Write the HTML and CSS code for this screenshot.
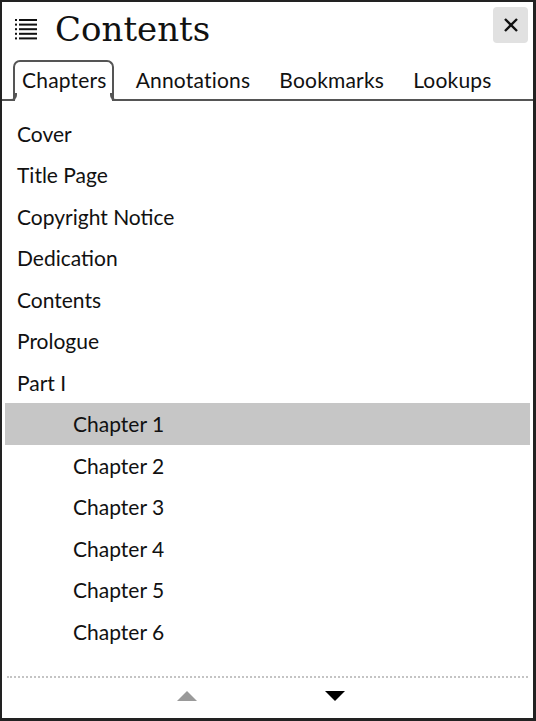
FILE: index.html
```html
<!DOCTYPE html>
<html>
<head>
<meta charset="utf-8">
<link rel="stylesheet" href="styles.css">
</head>
<body>
<div class="panel">
  <div class="header">
    <svg class="toc-icon" width="22" height="22" viewBox="0 0 22 22">
      <g fill="#111">
        <rect x="0" y="1" width="2" height="2"/><rect x="4" y="1" width="18" height="2"/>
        <rect x="0" y="5.6" width="2" height="2"/><rect x="4" y="5.6" width="18" height="2"/>
        <rect x="0" y="10.2" width="2" height="2"/><rect x="4" y="10.2" width="18" height="2"/>
        <rect x="0" y="14.8" width="2" height="2"/><rect x="4" y="14.8" width="18" height="2"/>
        <rect x="0" y="19.4" width="2" height="2"/><rect x="4" y="19.4" width="18" height="2"/>
      </g>
    </svg>
    <h1 class="title">Contents</h1>
    <button class="close" aria-label="Close">
      <svg width="16" height="16" viewBox="0 0 16 16"><path d="M2 2 L14 14 M14 2 L2 14" stroke="#111" stroke-width="2.4" fill="none"/></svg>
    </button>
  </div>
  <div class="tabs">
    <div class="tab active">Chapters</div>
    <div class="tab">Annotations</div>
    <div class="tab">Bookmarks</div>
    <div class="tab">Lookups</div>
  </div>
  <ul class="list">
    <li class="item">Cover</li>
    <li class="item">Title Page</li>
    <li class="item">Copyright Notice</li>
    <li class="item">Dedication</li>
    <li class="item">Contents</li>
    <li class="item">Prologue</li>
    <li class="item">Part I</li>
    <li class="item sub selected">Chapter 1</li>
    <li class="item sub">Chapter 2</li>
    <li class="item sub">Chapter 3</li>
    <li class="item sub">Chapter 4</li>
    <li class="item sub">Chapter 5</li>
    <li class="item sub">Chapter 6</li>
  </ul>
  <div class="footer">
    <span class="arrow up"></span>
    <span class="arrow down"></span>
  </div>
</div>
</body>
</html>
```
FILE: styles.css
```css
* { box-sizing: border-box; }
html, body { margin: 0; padding: 0; background: #fff; }
body { font-family: "Lato", "Open Sans", sans-serif; color: #111; }

.panel {
  width: 536px;
  height: 721px;
  border-style: solid;
  border-color: #222;
  border-width: 2px 3px 3px 2px;
  display: flex;
  flex-direction: column;
  overflow: hidden;
}

.header {
  display: flex;
  align-items: center;
  height: 57px;
  padding-left: 13px;
  padding-right: 5px;
}
.toc-icon { display: block; margin-top: -4px; }
.title {
  margin: -4px 0 0 18px;
  font-family: "DejaVu Serif", serif;
  font-weight: normal;
  font-size: 34px;
  line-height: 1;
  color: #111;
}
.close {
  margin-left: auto;
  margin-top: -12px;
  width: 35px;
  height: 36px;
  border: none;
  border-radius: 4px;
  background: #e1e1e1;
  display: flex;
  align-items: center;
  justify-content: center;
  padding: 0;
}
.close svg { display: block; }

.tabs {
  display: flex;
  align-items: flex-end;
  height: 42px;
  border-bottom: 2px solid #555;
  padding-left: 11px;
  gap: 13px;
}
.tab {
  position: relative;
  height: 41px;
  padding: 0 5px 0 7px;
  border: 2px solid transparent;
  border-bottom: none;
  border-radius: 7px 7px 0 0;
  font-size: 21px;
  letter-spacing: 0.2px;
  line-height: 36px;
  color: #111;
  margin-bottom: -2px;
}
.tab.active {
  border-color: #555;
  background: #fff;
}
.tab.active::before,
.tab.active::after {
  content: "";
  position: absolute;
  bottom: 0;
  width: 7px;
  height: 6px;
  border-bottom: 2px solid #555;
}
.tab.active::before {
  left: -7px;
  border-right: 2px solid #555;
  border-bottom-right-radius: 6px;
}
.tab.active::after {
  right: -7px;
  border-left: 2px solid #555;
  border-bottom-left-radius: 6px;
}

.list {
  list-style: none;
  margin: 0;
  padding: 11.5px 3px 0 3px;
  flex: 1;
}
.item {
  height: 41.5px;
  line-height: 41.5px;
  font-size: 21px;
  padding-left: 12px;
  color: #111;
}
.item.sub { padding-left: 68px; }
.item.selected { background: #c6c6c6; }

.footer {
  margin: 0 5px;
  height: 42px;
  border-top: 2px dotted #c4c4c4;
  display: flex;
  align-items: center;
  padding-left: 170px;
  gap: 128px;
  padding-bottom: 4px;
}
.arrow {
  width: 0;
  height: 0;
  border-left: 10px solid transparent;
  border-right: 10px solid transparent;
}
.arrow.up { border-bottom: 10px solid #9a9a9a; }
.arrow.down { border-top: 10px solid #000; }
```
